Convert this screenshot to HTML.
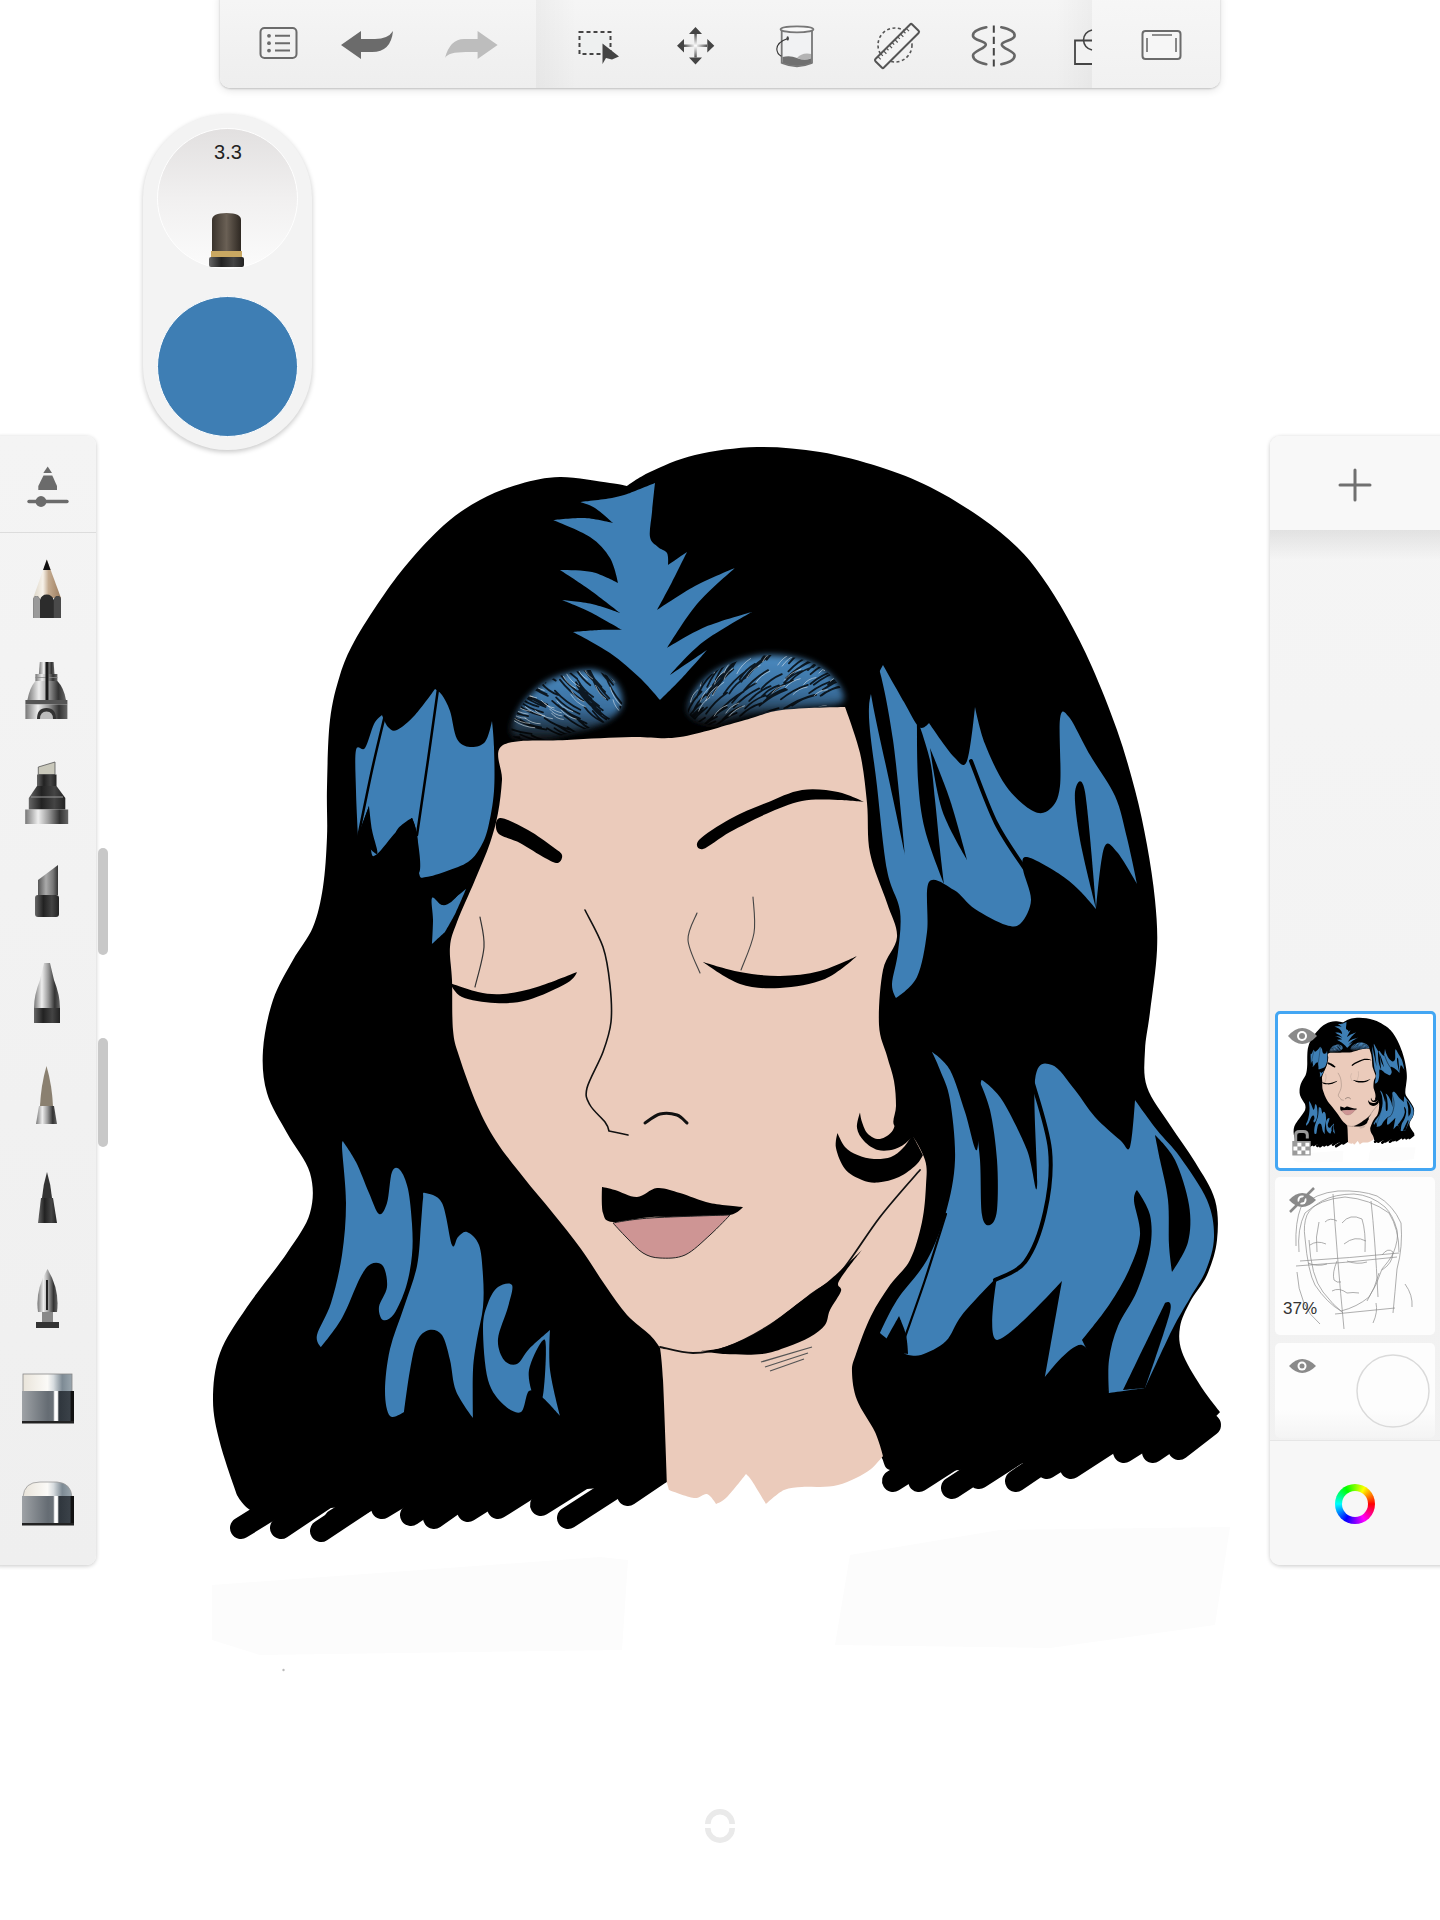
<!DOCTYPE html>
<html><head><meta charset="utf-8">
<style>
html,body{margin:0;padding:0;}
body{width:1440px;height:1920px;overflow:hidden;background:#fff;position:relative;font-family:"Liberation Sans",sans-serif;}
.abs{position:absolute;}
#art{position:absolute;left:0;top:0;}
#tb{left:220px;top:-12px;width:1000px;height:100px;border-radius:10px;background:linear-gradient(#F6F6F6,#EEEEEE);box-shadow:0 1px 2px rgba(0,0,0,.18),0 2px 8px rgba(0,0,0,.12);overflow:hidden;}
#tbmid{left:316px;top:0;width:556px;height:100px;background:linear-gradient(to right,rgba(0,0,0,.035),rgba(0,0,0,0) 40px,rgba(0,0,0,0) 520px,rgba(0,0,0,.03));}
#tbr{left:872px;top:0;width:128px;height:100px;background:linear-gradient(#F7F7F7,#F1F1F1);}
#puck{left:143px;top:114px;width:169px;height:336px;border-radius:85px;background:#F3F3F3;box-shadow:0 2px 5px rgba(0,0,0,.22);}
#pc1{left:157px;top:128px;width:139px;height:139px;border-radius:50%;background:linear-gradient(#E2E0E0,#F1F0F0 50%,#FBFBFB);border:1.5px solid #fff;}
#pc2{left:157px;top:296px;width:139px;height:139px;border-radius:50%;background:#3E7EB4;border:1.5px solid #fff;}
#sz{left:178px;top:141px;width:100px;text-align:center;font-size:20px;color:#222;}
#lt{left:-10px;top:436px;width:106px;height:1129px;border-radius:9px;background:linear-gradient(#F4F4F4,#EFEFEF);box-shadow:0 1px 4px rgba(0,0,0,.22);}
#ltsep{left:0;top:532px;width:96px;height:1px;background:#DCDCDC;}
.thumb{left:98px;width:10px;border-radius:5px;background:#C8C8C8;}
#rp{left:1270px;top:436px;width:190px;height:1129px;border-radius:10px;background:linear-gradient(#F5F5F5,#F1F1F1);box-shadow:0 1px 4px rgba(0,0,0,.22);overflow:hidden;}
#rph{left:0;top:0;width:190px;height:94px;background:#F8F8F8;}
#rpsh{left:0;top:94px;width:190px;height:30px;background:linear-gradient(rgba(0,0,0,.08),rgba(0,0,0,0));}
#rpc{left:0;top:1004px;width:190px;height:130px;background:#F7F7F7;border-top:1px solid #E6E6E6;}
.card{border-radius:5px;background:#FDFDFD;overflow:hidden;}
#card1{left:1275px;top:1011px;width:155px;height:154px;border:3px solid #43A6F3;background:#fff;}
#card2{left:1275px;top:1177px;width:160px;height:158px;}
#card3{left:1275px;top:1343px;width:160px;height:95px;background:linear-gradient(#FDFDFD 70%,#F4F4F4);}
#pct{left:1283px;top:1299px;font-size:17px;color:#333;}
#wheel{left:1335px;top:1484px;width:40px;height:40px;border-radius:50%;background:conic-gradient(from 90deg,#ff0000,#ff00ff,#0000ff,#00ffff,#00ff00,#ffff00,#ff0000);}
#wheelin{left:1342px;top:1491px;width:26px;height:26px;border-radius:50%;background:#F7F7F7;}
#ui{position:absolute;left:0;top:0;}
</style></head><body>
<svg id="art" width="1440" height="1920" viewBox="0 0 1440 1920"><g id="artg">
<path d="M212 1585L600 1557L628 1560L622 1650L260 1655L212 1640Z" fill="#FCFCFC"/>
<path d="M850 1555L1000 1530L1230 1527L1215 1625L1050 1648L835 1645Z" fill="#FCFCFC"/>
<circle cx="283.5" cy="1670" r="1.2" fill="#bbb"/>
<path d="M560 477C575 476.8 598.8 481.5 610 483C621.2 484.5 627 486 627 486C627 486 638.7 477.2 650 472C661.3 466.8 677.2 459.2 695 455C712.8 450.8 736.2 447.5 757 447C777.8 446.5 799.5 448.7 820 452C840.5 455.3 861.7 461.2 880 467C898.3 472.8 913.3 478.7 930 487C946.7 495.3 965.5 507 980 517C994.5 527 1006.7 537 1017 547C1027.3 557 1033.7 565.3 1042 577C1050.3 588.7 1058.7 602 1067 617C1075.3 632 1083.7 648.2 1092 667C1100.3 685.8 1109.8 709.5 1117 730C1124.2 750.5 1130 770.8 1135 790C1140 809.2 1143.7 826.7 1147 845C1150.3 863.3 1153.3 882.5 1155 900C1156.7 917.5 1157.8 931.3 1157 950C1156.2 968.7 1152 995.3 1150 1012C1148 1028.7 1145.5 1037.5 1145 1050C1144.5 1062.5 1142.8 1074.5 1147 1087C1151.2 1099.5 1162 1112.5 1170 1125C1178 1137.5 1187.5 1149.5 1195 1162C1202.5 1174.5 1211.3 1187 1215 1200C1218.7 1213 1218.3 1227.5 1217 1240C1215.7 1252.5 1211.5 1264.7 1207 1275C1202.5 1285.3 1194.5 1293.3 1190 1302C1185.5 1310.7 1181.3 1318.7 1180 1327C1178.7 1335.3 1178.7 1342.3 1182 1352C1185.3 1361.7 1193.7 1375 1200 1385C1206.3 1395 1220 1412 1220 1412C1220 1412 1212 1421.2 1207 1425C1202 1428.8 1199.5 1432.2 1190 1435C1180.5 1437.8 1168.3 1438.7 1150 1442C1131.7 1445.3 1105 1451 1080 1455C1055 1459 1025 1463.2 1000 1466C975 1468.8 948.3 1471.3 930 1472C911.7 1472.7 901.7 1473.7 890 1470C878.3 1466.3 891.7 1451.3 860 1450C828.3 1448.7 732.2 1456.7 700 1462C667.8 1467.3 683.7 1477.7 667 1482C650.3 1486.3 627.8 1485.8 600 1488C572.2 1490.2 533.3 1492.5 500 1495C466.7 1497.5 433.3 1500.5 400 1503C366.7 1505.5 324.2 1508.5 300 1510C275.8 1511.5 265.5 1514.5 255 1512C244.5 1509.5 237 1495 237 1495C237 1495 224 1458.8 220 1443C216 1427.2 213 1415 213 1400C213 1385 214.3 1368.5 220 1353C225.7 1337.5 235.8 1323.7 247 1307C258.2 1290.3 276.5 1268.7 287 1253C297.5 1237.3 306.2 1226.3 310 1213C313.8 1199.7 313.8 1186.3 310 1173C306.2 1159.7 294.2 1146.3 287 1133C279.8 1119.7 271 1106.8 267 1093C263 1079.2 262 1065.5 263 1050C264 1034.5 268 1015 273 1000C278 985 286.3 972.2 293 960C299.7 947.8 308 939.2 313 927C318 914.8 320.7 902 323 887C325.3 872 326.3 853.7 327 837C327.7 820.3 326.5 806.5 327 787C327.5 767.5 327.8 738.7 330 720C332.2 701.3 336 688 340 675C344 662 347.2 654.7 354 642C360.8 629.3 372 612.2 381 599C390 585.8 397.5 575.3 408 563C418.5 550.7 432 535.5 444 525C456 514.5 467.3 506.8 480 500C492.7 493.2 506.7 487.8 520 484C533.3 480.2 545 477.2 560 477Z" fill="#000"/>
<line x1="241" y1="1528" x2="315" y2="1482" stroke="#000" stroke-width="22" stroke-linecap="round"/>
<line x1="281" y1="1528" x2="350" y2="1482" stroke="#000" stroke-width="22" stroke-linecap="round"/>
<line x1="321" y1="1531" x2="395" y2="1482" stroke="#000" stroke-width="22" stroke-linecap="round"/>
<line x1="335" y1="1520" x2="400" y2="1480" stroke="#000" stroke-width="22" stroke-linecap="round"/>
<line x1="382" y1="1508" x2="445" y2="1470" stroke="#000" stroke-width="22" stroke-linecap="round"/>
<line x1="411" y1="1515" x2="470" y2="1475" stroke="#000" stroke-width="22" stroke-linecap="round"/>
<line x1="434" y1="1518" x2="495" y2="1475" stroke="#000" stroke-width="22" stroke-linecap="round"/>
<line x1="468" y1="1511" x2="525" y2="1475" stroke="#000" stroke-width="22" stroke-linecap="round"/>
<line x1="498" y1="1508" x2="555" y2="1472" stroke="#000" stroke-width="22" stroke-linecap="round"/>
<line x1="541" y1="1505" x2="600" y2="1468" stroke="#000" stroke-width="22" stroke-linecap="round"/>
<line x1="568" y1="1518" x2="630" y2="1478" stroke="#000" stroke-width="22" stroke-linecap="round"/>
<line x1="628" y1="1495" x2="662" y2="1472" stroke="#000" stroke-width="22" stroke-linecap="round"/>
<line x1="893" y1="1481" x2="950" y2="1445" stroke="#000" stroke-width="22" stroke-linecap="round"/>
<line x1="919" y1="1481" x2="975" y2="1445" stroke="#000" stroke-width="22" stroke-linecap="round"/>
<line x1="952" y1="1488" x2="1010" y2="1450" stroke="#000" stroke-width="22" stroke-linecap="round"/>
<line x1="979" y1="1478" x2="1035" y2="1442" stroke="#000" stroke-width="22" stroke-linecap="round"/>
<line x1="1016" y1="1481" x2="1072" y2="1443" stroke="#000" stroke-width="22" stroke-linecap="round"/>
<line x1="1047" y1="1468" x2="1100" y2="1435" stroke="#000" stroke-width="22" stroke-linecap="round"/>
<line x1="1071" y1="1468" x2="1125" y2="1433" stroke="#000" stroke-width="22" stroke-linecap="round"/>
<line x1="1124" y1="1452" x2="1175" y2="1420" stroke="#000" stroke-width="22" stroke-linecap="round"/>
<line x1="1153" y1="1452" x2="1200" y2="1420" stroke="#000" stroke-width="22" stroke-linecap="round"/>
<line x1="1179" y1="1449" x2="1210" y2="1425" stroke="#000" stroke-width="22" stroke-linecap="round"/>
<g><defs><clipPath id="clpL"><path d="M512 735C509 729.2 515.7 714.2 522 705C528.3 695.8 538.7 685.8 550 680C561.3 674.2 579.2 669.7 590 670C600.8 670.3 609.7 676.2 615 682C620.3 687.8 623.7 698.3 622 705C620.3 711.7 613.7 717.3 605 722C596.3 726.7 580.8 730 570 733C559.2 736 549.7 739.7 540 740C530.3 740.3 515 740.8 512 735Z"/></clipPath><clipPath id="clpR"><path d="M688 712C686 705.2 693 692 700 684C707 676 718.3 668.8 730 664C741.7 659.2 756.7 655.3 770 655C783.3 654.7 799.2 657.8 810 662C820.8 666.2 829.7 673.3 835 680C840.3 686.7 847.8 697.3 842 702C836.2 706.7 815.3 706 800 708C784.7 710 764.7 711.2 750 714C735.3 716.8 722.3 725.3 712 725C701.7 724.7 690 718.8 688 712Z"/></clipPath></defs><linearGradient id="hg" x1="0" y1="0" x2="0" y2="1"><stop offset="0" stop-color="#4a8ac0"/><stop offset="0.55" stop-color="#3a6f9e"/><stop offset="1" stop-color="#111"/></linearGradient><filter id="hblur" x="-20%" y="-20%" width="140%" height="140%"><feGaussianBlur stdDeviation="3"/></filter><path d="M512 735C509 729.2 515.7 714.2 522 705C528.3 695.8 538.7 685.8 550 680C561.3 674.2 579.2 669.7 590 670C600.8 670.3 609.7 676.2 615 682C620.3 687.8 623.7 698.3 622 705C620.3 711.7 613.7 717.3 605 722C596.3 726.7 580.8 730 570 733C559.2 736 549.7 739.7 540 740C530.3 740.3 515 740.8 512 735Z" fill="url(#hg)" filter="url(#hblur)"/><path d="M688 712C686 705.2 693 692 700 684C707 676 718.3 668.8 730 664C741.7 659.2 756.7 655.3 770 655C783.3 654.7 799.2 657.8 810 662C820.8 666.2 829.7 673.3 835 680C840.3 686.7 847.8 697.3 842 702C836.2 706.7 815.3 706 800 708C784.7 710 764.7 711.2 750 714C735.3 716.8 722.3 725.3 712 725C701.7 724.7 690 718.8 688 712Z" fill="url(#hg)" filter="url(#hblur)"/><g clip-path="url(#clpL)"><path d="M579.9 718.7Q564.5 712.3 552.2 700.9M579.5 713.8Q566.1 708.1 556.2 697.5M542.9 712.4Q528.6 708.6 516.9 699.6M617.5 683.5Q609.4 673.9 606.6 661.5M531.6 733.8Q516.4 732.7 502.9 725.7M527.2 746.5Q510.1 746.5 494.1 740.7M601.9 721.5Q591.4 716.5 584.6 707.0M516.8 711.3Q505.9 710.0 497.2 703.2M539.4 690.1Q529.0 686.9 522.0 678.6M580.3 709.8Q565.8 702.6 554.9 690.6M586.6 723.5Q573.5 718.8 563.6 708.9M602.8 710.3Q592.3 703.7 586.1 692.9M649.6 757.1Q637.3 746.5 629.7 732.2M607.6 699.7Q598.1 692.0 593.5 680.8M555.7 680.6Q542.1 672.9 532.3 660.6M571.1 737.2Q558.0 735.5 547.0 728.3M640.1 741.2Q631.9 734.5 628.5 724.4M546.3 741.1Q532.6 740.7 520.3 734.5M640.5 707.0Q634.5 697.7 634.2 686.6M600.2 733.5Q588.4 729.8 579.7 721.0M531.5 699.7Q515.3 694.2 502.1 683.6M613.1 684.8Q604.7 675.9 601.6 664.0M531.4 678.8Q516.9 672.2 505.9 660.8M541.0 715.3Q527.7 712.5 517.0 704.2M541.2 727.3Q529.7 726.4 520.3 719.8M599.5 685.0Q589.5 676.1 584.3 663.7M547.8 695.8Q532.1 689.1 519.7 677.3M621.6 703.4Q610.9 690.8 605.4 675.3M547.3 704.6Q531.9 699.1 519.6 688.5M601.4 686.9Q589.2 674.8 581.9 659.2M546.6 694.2Q532.1 688.2 520.9 677.1M558.0 695.0Q547.6 691.1 540.8 682.4M528.1 716.1Q516.0 714.4 506.2 707.1M595.5 704.2Q584.0 696.8 576.9 685.3M639.6 716.9Q631.7 704.8 629.4 690.5M626.3 690.0Q619.2 680.8 617.6 669.3M635.2 739.6Q625.3 732.3 620.1 721.2M546.3 729.7Q529.6 727.0 515.0 718.6M547.3 744.6Q530.9 743.9 515.7 737.4M594.3 706.3Q584.4 700.9 578.6 691.1M521.8 744.2Q509.7 745.0 498.6 739.8M609.3 698.4Q597.7 687.3 591.0 672.7M593.2 696.9Q583.3 690.5 577.8 680.1M608.1 680.7Q599.7 672.0 596.3 660.3M593.6 739.2Q579.3 735.9 567.5 727.2M554.0 741.4Q542.0 741.3 531.6 735.4M518.8 692.9Q505.8 689.2 495.6 680.2M524.0 685.8Q511.6 681.7 502.4 672.4M590.3 685.3Q579.9 677.4 574.2 665.7M636.9 752.4Q623.5 745.8 613.6 734.5M606.4 719.4Q596.3 713.9 590.2 704.1M523.2 675.7Q508.0 668.9 496.2 657.1M609.0 746.4Q598.4 744.7 590.2 737.7M601.8 714.1Q588.8 705.7 579.9 693.1M558.5 747.3Q547.4 747.9 537.6 742.6M592.9 732.0Q577.2 726.6 564.5 715.9M616.2 731.6Q602.5 723.5 592.8 711.0M634.2 706.9Q625.7 694.3 622.9 679.4M635.6 744.2Q624.4 736.7 617.7 725.2M623.0 742.5Q609.9 736.5 600.4 725.7M599.1 705.9Q587.2 697.7 579.6 685.3M595.8 683.1Q584.8 673.2 578.6 659.7M646.9 748.4Q636.5 736.9 631.3 722.4M570.3 729.6Q556.2 726.5 544.5 718.0M574.5 736.0Q563.4 734.9 554.5 728.1M612.9 680.0Q603.6 668.8 599.7 654.7M580.7 693.8Q567.9 685.6 559.2 673.1M586.0 723.0Q570.5 716.7 558.2 705.3M548.8 673.9Q537.6 668.2 530.3 657.9M603.1 690.4Q594.1 683.0 589.9 672.0M634.3 729.0Q624.7 719.4 620.3 706.6M631.3 704.6Q622.6 692.4 619.5 677.7M545.5 707.0Q530.4 702.1 518.1 691.9M637.1 744.9Q626.2 737.4 619.8 726.0M591.4 698.4Q581.6 692.4 576.0 682.3M586.7 738.3Q570.8 734.7 557.4 725.6M611.9 746.3Q599.7 743.7 590.2 735.7M538.5 706.6Q526.4 703.7 517.1 695.5M546.5 705.3Q532.4 700.7 521.3 691.0M583.5 700.9Q569.7 692.5 559.9 679.6M640.9 711.4Q634.7 702.1 634.3 691.0M519.5 737.2Q508.6 737.7 499.0 732.4M609.4 719.3Q598.5 712.8 592.0 701.9M616.5 676.6Q609.1 667.8 607.2 656.4M577.1 678.7Q564.2 669.0 555.7 655.3M545.4 682.6Q535.2 678.7 528.7 669.9M600.2 710.9Q587.8 702.9 579.6 690.5M607.7 738.3Q591.9 732.2 579.1 720.9M605.1 691.9Q595.0 682.7 589.7 670.0M539.6 674.2Q527.3 668.2 518.6 657.5" stroke="#000" stroke-width="1.8" fill="none" opacity="0.8" stroke-linecap="round"/><path d="M572.7 711.5Q563.2 708.7 556.9 700.9M536.5 675.6Q528.2 673.0 523.4 665.6M552.5 718.7Q542.5 717.3 535.1 710.4M585.4 706.8Q576.2 703.0 570.9 694.6M536.6 697.9Q528.7 696.8 523.9 690.5M614.8 682.3Q607.5 674.6 605.5 664.2M530.2 711.1Q521.6 710.5 515.5 704.4M563.4 719.4Q556.1 719.0 551.6 713.2M529.7 723.3Q520.4 723.2 513.1 717.3M534.8 727.7Q523.6 727.1 514.4 720.9M533.0 696.9Q525.3 695.9 520.6 689.7M554.1 707.9Q546.3 706.8 541.5 700.5M592.5 678.7Q585.8 674.6 583.8 666.9M605.8 698.7Q598.3 693.8 595.5 685.3M583.8 701.8Q575.6 698.5 571.4 690.7M528.2 714.2Q517.0 712.7 508.2 705.7M622.1 713.3Q615.0 708.2 613.0 699.7M561.4 712.8Q551.6 710.6 544.9 703.2M533.8 687.4Q525.3 685.4 520.1 678.4M576.2 719.1Q567.1 717.1 561.2 710.0M525.9 718.3Q516.9 718.0 510.0 712.2M575.6 688.1Q567.4 684.4 563.4 676.3M561.9 715.9Q554.3 715.1 549.6 709.0M579.5 686.7Q570.6 681.9 566.0 672.8M525.8 689.4Q517.3 687.8 511.9 681.0M587.3 679.6Q579.5 674.7 576.5 666.1M544.1 690.4Q535.2 688.0 529.8 680.6M621.2 705.7Q613.1 698.0 610.1 687.2M540.2 723.8Q531.5 723.6 524.9 717.9M544.5 715.7Q533.6 713.9 525.3 706.7" stroke="#e8eef3" stroke-width="1.0" fill="none" opacity="0.55" stroke-linecap="round"/></g><g clip-path="url(#clpR)"><path d="M706.1 713.8Q714.5 701.1 727.1 692.7M812.9 667.1Q821.3 658.3 832.8 654.5M690.4 678.0Q693.7 662.9 702.6 650.2M687.9 700.4Q690.8 688.7 699.0 679.9M712.9 693.9Q720.7 679.8 733.2 669.4M770.8 654.6Q777.4 644.1 788.2 637.9M685.8 730.7Q694.2 717.0 707.0 707.4M800.6 720.0Q814.1 712.4 829.6 710.4M829.4 715.9Q840.0 709.6 852.3 709.0M809.2 693.1Q821.7 683.7 836.8 679.7M761.3 689.0Q769.8 679.1 781.8 674.1M739.6 679.5Q745.2 669.6 755.1 663.9M801.5 718.3Q816.6 710.0 833.5 707.4M780.9 699.4Q792.9 689.5 807.8 684.8M687.0 713.6Q691.8 700.9 701.5 691.5M695.8 674.6Q699.1 660.9 707.8 649.8M706.9 695.4Q713.2 682.2 724.3 672.7M732.8 666.7Q738.9 654.2 749.7 645.6M706.5 674.9Q709.8 663.5 718.3 655.1M727.4 663.1Q733.5 649.5 744.5 639.4M828.1 684.6Q840.4 675.4 855.3 671.6M828.6 654.7Q836.3 646.2 847.3 642.6M801.3 720.7Q814.2 713.4 828.9 711.7M691.1 694.3Q696.1 678.7 706.4 666.0M818.5 716.8Q828.6 710.4 840.6 709.8M810.4 684.0Q822.2 674.2 836.9 669.7M684.3 737.4Q692.6 725.4 705.0 717.7M788.4 671.4Q798.3 660.6 811.8 654.6M763.7 701.8Q773.0 692.7 785.4 688.7M790.7 680.6Q799.4 671.5 811.3 667.5M693.1 711.9Q697.2 701.4 706.1 694.3M704.0 663.9Q707.9 649.5 717.2 637.9M761.4 696.9Q768.5 688.7 778.9 685.4M741.3 681.7Q747.0 672.0 756.9 666.6M665.5 739.6Q667.9 728.5 675.6 720.0M715.9 679.4Q721.8 666.1 732.7 656.3M679.2 696.7Q681.2 683.8 688.6 673.2M810.1 652.9Q818.4 643.1 830.3 638.1M746.6 732.4Q758.3 724.6 772.2 722.5M745.1 708.5Q753.7 699.4 765.6 695.3M670.8 703.3Q672.8 686.7 680.6 672.0M790.6 675.3Q801.2 664.5 815.2 658.7M810.6 674.2Q821.3 664.4 835.0 659.7M726.4 675.2Q731.7 663.9 741.6 656.3M701.3 683.8Q704.1 673.3 712.0 665.8M732.1 664.5Q739.2 650.5 751.0 640.3M766.9 656.1Q775.9 643.2 789.0 634.6M696.7 697.6Q701.8 684.2 711.9 674.1M721.7 679.9Q727.6 667.7 738.1 659.3M687.5 726.7Q692.4 716.4 701.8 710.1M807.9 670.1Q816.6 661.0 828.6 657.0M733.3 656.8Q737.5 646.1 746.5 638.9M723.7 694.1Q732.8 680.5 746.2 671.0M836.4 655.9Q846.6 646.1 860.0 641.5M685.8 723.2Q690.9 711.5 700.8 703.5M820.6 695.8Q829.5 688.6 840.9 686.9M667.7 681.9Q667.9 665.5 674.1 650.3M690.8 696.8Q694.3 684.2 703.1 674.6M722.5 719.8Q730.4 710.7 741.7 706.5M784.2 708.6Q798.1 698.9 814.4 694.8M751.4 728.3Q762.4 720.5 775.8 718.2M759.5 705.8Q771.7 695.2 786.9 689.7M822.2 660.8Q830.0 652.3 841.0 648.8M753.6 720.1Q764.8 711.4 778.6 708.1M713.4 732.9Q722.4 724.2 734.5 720.6M682.7 659.4Q682.8 648.6 688.6 639.4M788.9 663.3Q799.0 651.7 812.8 644.9M810.6 733.5Q825.3 727.0 841.3 726.5M733.7 707.4Q744.6 695.5 759.1 688.4M786.1 678.3Q797.2 667.2 811.6 661.1M683.4 687.0Q686.9 670.1 696.0 655.5M743.7 678.6Q752.7 665.6 765.9 656.9M744.5 653.4Q748.7 643.4 757.6 637.2M707.2 686.9Q714.2 671.5 726.0 659.6M702.1 727.4Q712.6 714.9 726.9 707.1M730.8 735.5Q743.7 726.7 759.0 723.4M747.5 676.5Q755.1 665.1 766.8 658.0M821.8 695.2Q831.2 687.9 842.9 686.0M729.3 693.5Q735.5 683.3 745.9 677.5M761.9 659.0Q771.0 645.8 784.3 636.8M696.4 666.7Q699.4 652.5 708.0 640.8M714.0 727.7Q723.7 717.7 736.6 712.8M753.3 720.9Q762.6 713.2 774.4 710.9M792.2 705.6Q802.9 697.4 816.1 694.8M829.1 655.5Q841.1 644.3 856.2 638.2M688.5 724.9Q693.5 714.4 703.1 707.8M674.1 703.1Q676.8 686.5 685.2 672.0M707.4 697.6Q714.0 684.5 725.2 675.1M707.5 698.1Q711.5 688.2 720.3 682.1M740.2 716.0Q749.3 707.0 761.6 703.2M703.0 662.7Q707.0 648.0 716.3 635.9M733.2 729.4Q745.6 720.0 760.6 716.0M677.7 735.6Q685.7 720.8 698.4 709.8M803.0 720.2Q816.1 712.8 831.2 711.1M786.8 707.6Q798.5 699.0 812.7 695.8M708.7 669.4Q713.7 654.8 723.9 643.3M766.8 659.8Q775.3 647.6 788.0 639.8M766.7 696.7Q778.2 685.9 792.9 680.3M813.8 684.7Q826.4 674.7 841.7 670.1M749.2 701.0Q758.2 691.1 770.6 686.2M822.8 689.8Q836.7 680.1 853.1 675.8M718.3 712.7Q729.0 699.8 743.5 691.6M784.1 682.8Q791.4 674.4 802.0 671.0M744.1 690.4Q754.2 677.9 768.1 670.1M798.4 732.1Q810.4 725.9 824.0 725.5M732.1 702.7Q742.0 690.6 755.7 683.3M681.0 674.0Q681.5 662.4 687.8 652.7M718.0 683.7Q726.1 668.6 738.8 657.3M697.8 731.9Q705.5 722.0 716.9 716.7M698.0 734.3Q704.9 725.4 715.4 721.4" stroke="#000" stroke-width="1.8" fill="none" opacity="0.8" stroke-linecap="round"/><path d="M700.4 701.2Q703.6 691.8 711.6 685.9M824.3 670.6Q829.6 664.2 837.8 663.0M793.1 694.5Q798.7 688.2 807.1 687.1M784.3 680.2Q791.0 672.1 801.0 669.0M702.7 673.1Q705.1 662.4 712.8 654.6M736.9 673.7Q741.5 664.1 750.5 658.6M777.8 665.0Q782.8 657.0 791.7 653.6M782.2 666.1Q787.7 657.9 797.0 654.4M704.9 676.9Q705.9 669.4 712.0 664.9M714.2 716.0Q718.7 708.3 727.1 705.2M830.2 681.3Q837.2 674.5 846.9 673.1M814.4 695.5Q819.7 689.9 827.3 689.7M772.1 693.2Q776.8 686.8 784.6 685.4M698.6 711.1Q701.9 702.3 709.8 697.4M714.5 684.1Q716.7 676.3 723.6 672.0M803.6 684.5Q808.3 678.4 815.9 677.6M806.3 660.1Q811.0 653.1 819.1 651.0M690.6 702.0Q691.6 694.4 697.8 689.8M762.6 661.8Q766.8 653.6 775.1 649.7M785.5 687.6Q791.2 680.6 800.2 678.7M755.6 683.0Q760.8 674.8 769.8 671.2M700.3 686.0Q701.7 677.9 708.2 672.9M813.3 710.6Q818.8 705.4 826.3 705.9M705.8 700.7Q709.2 691.7 717.2 686.5M687.6 703.1Q690.3 692.2 698.1 684.3M746.9 677.8Q751.4 669.4 760.1 665.3M824.0 670.3Q829.4 663.7 837.8 662.4M712.7 695.6Q716.0 687.0 723.9 682.3M724.1 679.3Q726.1 672.2 732.7 668.8M729.3 716.1Q735.2 708.5 744.5 705.8M725.9 713.0Q730.6 705.6 738.9 703.1M723.7 658.2Q725.2 650.5 731.7 646.1M714.1 673.0Q717.4 662.6 725.6 655.6M724.1 672.8Q727.3 663.6 735.3 658.0M818.9 673.0Q826.1 665.5 836.2 663.1" stroke="#e8eef3" stroke-width="1.0" fill="none" opacity="0.55" stroke-linecap="round"/></g></g>
<path d="M503 745C513.8 738.3 545.5 741.3 567 740C588.5 738.7 613.2 737.5 632 737C650.8 736.5 661.2 739.8 680 737C698.8 734.2 728 724.5 745 720C762 715.5 765.3 712.2 782 710C798.7 707.8 845 707 845 707C845 707 856.3 737 860 753C863.7 769 865.3 786.3 867 803C868.7 819.7 866.7 836.3 870 853C873.3 869.7 882.5 889 887 903C891.5 917 897.7 925.8 897 937C896.3 948.2 886 955.3 883 970C880 984.7 878.3 1010.7 879 1025C879.7 1039.3 884.5 1046.7 887 1056C889.5 1065.3 892.5 1072.7 894 1081C895.5 1089.3 896 1098.7 896 1106C896 1113.3 891.7 1120.5 894 1125C896.3 1129.5 904.8 1127.2 910 1133C915.2 1138.8 922.3 1151.3 925 1160C927.7 1168.7 926.5 1174.7 926 1185C925.5 1195.3 924.7 1209.5 922 1222C919.3 1234.5 915.3 1249.5 910 1260C904.7 1270.5 896.5 1275.7 890 1285C883.5 1294.3 876.7 1304.5 871 1316C865.3 1327.5 859.2 1344.7 856 1354C852.8 1363.3 851.8 1364.3 852 1372C852.2 1379.7 853.2 1390 857 1400C860.8 1410 870.7 1422.7 875 1432C879.3 1441.3 883 1456 883 1456C883 1456 875.5 1465.3 871 1469C866.5 1472.7 861.5 1475.3 856 1478C850.5 1480.7 844 1483.5 838 1485C832 1486.5 826 1486.7 820 1487C814 1487.3 808 1486.5 802 1487C796 1487.5 790 1487.2 784 1490C778 1492.8 766 1504 766 1504C766 1504 755.3 1486 752 1481C748.7 1476 746 1474 746 1474C746 1474 732 1492 727 1497C722 1502 716 1504 716 1504C716 1504 710.7 1495 707 1494C703.3 1493 700.3 1498.7 694 1498C687.7 1497.3 669 1490 669 1490C669 1490 667 1483 667 1483C667 1483 664.2 1402.5 663 1380C661.8 1357.5 660 1348 660 1348C660 1348 655.5 1340.5 650 1335C644.5 1329.5 634.5 1323.3 627 1315C619.5 1306.7 612.7 1296 605 1285C597.3 1274 589.8 1261.2 581 1249C572.2 1236.8 561.5 1223.8 552 1212C542.5 1200.2 533.3 1189.8 524 1178C514.7 1166.2 503.8 1153.2 496 1141C488.2 1128.8 483.2 1119.2 477 1105C470.8 1090.8 463 1068.5 459 1056C455 1043.5 454.2 1042.7 453 1030C451.8 1017.3 452.5 993.8 452 980C451.5 966.2 449.2 956.7 450 947C450.8 937.3 452.8 933.2 457 922C461.2 910.8 469.5 893.2 475 880C480.5 866.8 486.2 854.2 490 843C493.8 831.8 496 823.5 498 813C500 802.5 501.2 791.3 502 780C502.8 768.7 492.2 751.7 503 745Z" fill="#EBCBBB"/>
<path d="M655 483C655 483 652.8 503 652 512C651.2 521 649 531.2 650 537C651 542.8 655.2 544.3 658 547C660.8 549.7 665.3 550 667 553C668.7 556 668 565 668 565C668 565 687 552 687 552C687 552 677 572.3 672 582C667 591.7 657 610 657 610C657 610 682 593 695 586C708 579 735 568 735 568C735 568 708.3 590.7 697 604C685.7 617.3 667 648 667 648C667 648 690.8 633 705 627C719.2 621 752 612 752 612C752 612 716.7 631.5 703 642C689.3 652.5 670 675 670 675C670 675 707 650 707 650C707 650 689.8 669.7 682 678C674.2 686.3 660 700 660 700C660 700 648.3 685.8 640 678C631.7 670.2 621.2 660.7 610 653C598.8 645.3 573 632 573 632C573 632 591.8 630.3 600 630C608.2 629.7 622 630 622 630C622 630 600 617 590 612C580 607 562 600 562 600C562 600 582.3 601.8 592 604C601.7 606.2 620 613 620 613C620 613 600 597.2 590 590C580 582.8 560 570 560 570C560 570 582.3 569.8 592 572C601.7 574.2 618 583 618 583C618 583 614.7 565.7 610 558C605.3 550.3 599.5 543.3 590 537C580.5 530.7 553 520 553 520C553 520 575 517.5 585 518C595 518.5 613 523 613 523C613 523 600.5 511.5 595 508C589.5 504.5 580 502 580 502C580 502 603.7 499.5 612 498C620.3 496.5 630 493 630 493C630 493 655 483 655 483Z" fill="#3E7FB5"/>
<path d="M356 750C357.5 742.8 362 752.3 365 748C368 743.7 371.2 729.5 374 724C376.8 718.5 382 715 382 715C382 715 385.5 724.5 388 727C390.5 729.5 392.5 732 397 730C401.5 728 408.7 721.8 415 715C421.3 708.2 435 689 435 689C435 689 439.5 691.3 442 695C444.5 698.7 447.5 703.7 450 711C452.5 718.3 453.7 733 457 739C460.3 745 465.3 746.5 470 747C474.7 747.5 481.3 746.3 485 742C488.7 737.7 492 721 492 721C492 721 493.7 735.3 494 747C494.3 758.7 495 777.5 494 791C493 804.5 490.3 818.5 488 828C485.7 837.5 483.3 842.3 480 848C476.7 853.7 473.5 858.2 468 862C462.5 865.8 454 868.5 447 871C440 873.5 430.7 876.7 426 877C421.3 877.3 420.5 880 419 873C417.5 866 418.2 844.2 417 835C415.8 825.8 412 818 412 818C412 818 401.8 826 396 832C390.2 838 381.2 851 377 854C372.8 857 372.3 858 371 850C369.7 842 369 806 369 806C369 806 358 836 358 836C358 836 356.3 805.3 356 791C355.7 776.7 354.5 757.2 356 750Z" fill="#3E7FB5"/>
<path d="M432 898C433.5 895.5 438.7 904.7 442 905C445.3 905.3 448 902.7 452 900C456 897.3 466 889 466 889C466 889 459.5 904.8 456 912C452.5 919.2 445 932 445 932C445 932 432 944 432 944C432 944 433 927.7 433 920C433 912.3 430.5 900.5 432 898Z" fill="#3E7FB5"/>
<path d="M883 665C883 665 898 691.7 904 702C910 712.3 914.8 723.5 919 727C923.2 730.5 929 723 929 723C929 723 947.7 750.7 954 757C960.3 763.3 963.5 769.3 967 761C970.5 752.7 975 707 975 707C975 707 979.8 730.8 985 744C990.2 757.2 998 774.8 1006 786C1014 797.2 1025.7 807.2 1033 811C1040.3 814.8 1045.5 813.2 1050 809C1054.5 804.8 1058.3 801 1060 786C1061.7 771 1058.5 730.5 1060 719C1061.5 707.5 1064 711 1069 717C1074 723 1082.3 741.8 1090 755C1097.7 768.2 1108.8 782.2 1115 796C1121.2 809.8 1123.3 823.3 1127 838C1130.7 852.7 1137 884 1137 884C1137 884 1122.5 858 1117 852C1111.5 846 1107.5 838.5 1104 848C1100.5 857.5 1096 909 1096 909C1096 909 1085.3 896 1079 890C1072.7 884 1066.7 878.5 1058 873C1049.3 867.5 1032.8 857.7 1027 857C1021.2 856.3 1022.3 861.8 1023 869C1023.7 876.2 1031.3 891 1031 900C1030.7 909 1025.2 918.8 1021 923C1016.8 927.2 1013.7 927.3 1006 925C998.3 922.7 983.7 914.8 975 909C966.3 903.2 961.7 894.5 954 890C946.3 885.5 933.5 875 929 882C924.5 889 929 916.2 927 932C925 947.8 922.2 966 917 977C911.8 988 896 998 896 998C896 998 891.7 991.7 892 984C892.3 976.3 896.7 964.2 898 952C899.3 939.8 901.8 924.7 900 911C898.2 897.3 890.8 890.8 887 870C883.2 849.2 880 813.2 877 786C874 758.8 868 727.2 869 707C870 686.8 883 665 883 665Z" fill="#3E7FB5"/>
<path d="M932 1052C932 1052 944.5 1060 950 1070C955.5 1080 960.5 1098.7 965 1112C969.5 1125.3 974.5 1153.7 977 1150C979.5 1146.3 979.2 1101.7 980 1090C980.8 1078.3 982 1080 982 1080C982 1080 994.5 1088.3 1002 1100C1009.5 1111.7 1021.2 1135.5 1027 1150C1032.8 1164.5 1035.7 1198.7 1037 1187C1038.3 1175.3 1032.5 1100.3 1035 1080C1037.5 1059.7 1045.3 1063.3 1052 1065C1058.7 1066.7 1067.8 1081.3 1075 1090C1082.2 1098.7 1087.5 1108.7 1095 1117C1102.5 1125.3 1114.2 1135 1120 1140C1125.8 1145 1127.5 1153.7 1130 1147C1132.5 1140.3 1135 1100 1135 1100C1135 1100 1149.5 1120.5 1157 1130C1164.5 1139.5 1171.7 1145.3 1180 1157C1188.3 1168.7 1201.3 1186.7 1207 1200C1212.7 1213.3 1214.2 1225.3 1214 1237C1213.8 1248.7 1210 1259.8 1206 1270C1202 1280.2 1195.7 1288 1190 1298C1184.3 1308 1179.5 1315 1172 1330C1164.5 1345 1145 1388 1145 1388C1145 1388 1109 1393 1109 1393C1109 1393 1092.7 1347.7 1082 1345C1071.3 1342.3 1045 1377 1045 1377C1045 1377 1062 1281 1062 1281C1062 1281 1007.8 1340.7 997 1340C986.2 1339.3 997 1277 997 1277C997 1277 970.5 1304.3 962 1315C953.5 1325.7 952.8 1334.3 946 1341C939.2 1347.7 927.8 1352.8 921 1355C914.2 1357.2 905 1354 905 1354C905 1354 880 1333 880 1333C880 1333 889.2 1312.2 897 1300C904.8 1287.8 918.8 1274.7 927 1260C935.2 1245.3 941.3 1228.7 946 1212C950.7 1195.3 954.3 1178.7 955 1160C955.7 1141.3 952.5 1115 950 1100C947.5 1085 943 1078 940 1070C937 1062 932 1052 932 1052Z" fill="#3E7FB5"/>
<path d="M344 1143C344 1143 351.8 1153.7 356 1162C360.2 1170.3 365.2 1184.3 369 1193C372.8 1201.7 376 1212.3 379 1214C382 1215.7 384.8 1210 387 1203C389.2 1196 389.8 1177.5 392 1172C394.2 1166.5 397.3 1167.2 400 1170C402.7 1172.8 406 1180 408 1189C410 1198 411.3 1213 412 1224C412.7 1235 413 1244.5 412 1255C411 1265.5 409 1277.2 406 1287C403 1296.8 397.8 1308.5 394 1314C390.2 1319.5 385.5 1321.2 383 1320C380.5 1318.8 378.3 1312.5 379 1307C379.7 1301.5 386.3 1293.8 387 1287C387.7 1280.2 385.7 1269.8 383 1266C380.3 1262.2 374.8 1262 371 1264C367.2 1266 364.8 1269 360 1278C355.2 1287 348.5 1306.5 342 1318C335.5 1329.5 321 1347 321 1347C321 1347 315.3 1342.3 317 1335C318.7 1327.7 326.8 1316.3 331 1303C335.2 1289.7 339.5 1271.7 342 1255C344.5 1238.3 346 1221 346 1203C346 1185 342.3 1157 342 1147C341.7 1137 344 1143 344 1143Z" fill="#3E7FB5"/>
<path d="M425 1193C428.2 1193.7 437.5 1194.3 442 1203C446.5 1211.7 449.3 1239.3 452 1245C454.7 1250.7 455.5 1239.2 458 1237C460.5 1234.8 463.5 1230.7 467 1232C470.5 1233.3 476.3 1237.7 479 1245C481.7 1252.3 482.3 1265.7 483 1276C483.7 1286.3 484 1296.5 483 1307C482 1317.5 478.7 1328.5 477 1339C475.3 1349.5 473.7 1356.8 473 1370C472.3 1383.2 473 1418 473 1418C473 1418 459.8 1400.7 456 1391C452.2 1381.3 452.3 1369.3 450 1360C447.7 1350.7 445.5 1340 442 1335C438.5 1330 433.2 1329 429 1330C424.8 1331 420.2 1334.3 417 1341C413.8 1347.7 412.2 1358.2 410 1370C407.8 1381.8 404 1412 404 1412C404 1412 393.2 1419.5 390 1416C386.8 1412.5 385 1402.2 385 1391C385 1379.8 386.8 1363 390 1349C393.2 1335 399.5 1320.8 404 1307C408.5 1293.2 414.2 1279.8 417 1266C419.8 1252.2 420 1235.2 421 1224C422 1212.8 422.3 1204.2 423 1199C423.7 1193.8 421.8 1192.3 425 1193Z" fill="#3E7FB5"/>
<path d="M498 1287C502 1284 510.3 1281.7 512 1285C513.7 1288.3 510.3 1298 508 1307C505.7 1316 498.7 1330.2 498 1339C497.3 1347.8 500.8 1355.8 504 1360C507.2 1364.2 512.8 1365.8 517 1364C521.2 1362.2 523.5 1354.7 529 1349C534.5 1343.3 550 1330 550 1330C550 1330 548.3 1355.7 550 1370C551.7 1384.3 560 1416 560 1416C560 1416 547.2 1401.2 542 1397C536.8 1392.8 532.5 1388.5 529 1391C525.5 1393.5 525.2 1409.7 521 1412C516.8 1414.3 509.5 1410.3 504 1405C498.5 1399.7 491.5 1392.8 488 1380C484.5 1367.2 483 1340.8 483 1328C483 1315.2 485.5 1309.8 488 1303C490.5 1296.2 494 1290 498 1287Z" fill="#3E7FB5"/>
<path d="M428 918L425 950" stroke="#000" stroke-width="5" stroke-linecap="round"/><ellipse cx="451" cy="894" rx="14" ry="6" transform="rotate(-48 451 894)" fill="#000"/>
<path d="M385 715C382.8 724.2 376.5 749.5 372 770C367.5 790.5 360.3 826.7 358 838" fill="none" stroke="#000" stroke-width="2.5" stroke-linecap="round" stroke-linejoin="round"/>
<path d="M438 689C436.3 700.8 431.5 735.7 428 760C424.5 784.3 418.8 822.5 417 835" fill="none" stroke="#000" stroke-width="2.5" stroke-linecap="round" stroke-linejoin="round"/>
<path d="M369 806C369 806 358 836 358 836C358 836 374.7 855 377 854C379.3 853 373.3 838 372 830C370.7 822 369 806 369 806Z" fill="#000"/>
<path d="M412 818C412 818 415.8 825.8 417 835C418.2 844.2 422.5 868.8 419 873C415.5 877.2 399.8 866.8 396 860C392.2 853.2 393.3 839 396 832C398.7 825 412 818 412 818Z" fill="#000"/>
<path d="M868 660C869 654.2 873.8 651.7 878 665C882.2 678.3 888.5 708.3 893 740C897.5 771.7 905 855 905 855C905 855 894.5 805.8 889 780C883.5 754.2 875.5 720 872 700C868.5 680 867 665.8 868 660Z" fill="#000"/>
<path d="M917 718C917 718 927 746.3 930 760C933 773.7 933.3 785 935 800C936.7 815 938.5 836 940 850C941.5 864 944 884 944 884C944 884 929.3 847.3 925 830C920.7 812.7 919.3 798.7 918 780C916.7 761.3 917 718 917 718Z" fill="#000"/>
<path d="M930 748C930 748 943.8 781.3 950 800C956.2 818.7 967 860 967 860C967 860 948.2 828.7 942 810C935.8 791.3 930 748 930 748Z" fill="#000"/>
<path d="M971 761C975.2 771.3 987 805 996 823C1005 841 1020.2 861.3 1025 869" fill="none" stroke="#000" stroke-width="4" stroke-linecap="round" stroke-linejoin="round"/>
<path d="M1075 792C1075.8 784 1081.5 772.5 1085 792C1088.5 811.5 1096 909 1096 909C1096 909 1083.5 859.5 1080 840C1076.5 820.5 1074.2 800 1075 792Z" fill="#000"/>
<path d="M978 1078C978 1078 986.8 1096.3 990 1110C993.2 1123.7 995.8 1143.3 997 1160C998.2 1176.7 998.2 1199.2 997 1210C995.8 1220.8 992.5 1224.2 990 1225C987.5 1225.8 983.7 1225.8 982 1215C980.3 1204.2 981.2 1177.5 980 1160C978.8 1142.5 975.3 1123.7 975 1110C974.7 1096.3 978 1078 978 1078Z" fill="#000"/>
<path d="M1032 1080C1035 1091.7 1047.8 1128 1050 1150C1052.2 1172 1049.2 1193.3 1045 1212C1040.8 1230.7 1033.3 1250.7 1025 1262C1016.7 1273.3 1000 1277 995 1280" fill="none" stroke="#000" stroke-width="4" stroke-linecap="round" stroke-linejoin="round"/>
<path d="M946 1214C942.5 1225 931.8 1259.5 925 1280C918.2 1300.5 908.3 1327.5 905 1337" fill="none" stroke="#000" stroke-width="2.2" stroke-linecap="round" stroke-linejoin="round"/>
<path d="M899 1316C899 1316 904.5 1328.7 906 1335C907.5 1341.3 908 1354 908 1354C908 1354 880 1350 880 1350C880 1350 899 1316 899 1316Z" fill="#000"/>
<path d="M1137 1190C1137 1190 1147.8 1205.2 1150 1215C1152.2 1224.8 1152.2 1236.3 1150 1249C1147.8 1261.7 1142.3 1278.2 1137 1291C1131.7 1303.8 1122.7 1314.5 1118 1326C1113.3 1337.5 1110.5 1348.8 1109 1360C1107.5 1371.2 1109 1393 1109 1393C1109 1393 1082 1340 1082 1340C1082 1340 1101.2 1316.7 1109 1305C1116.8 1293.3 1123.8 1281.7 1129 1270C1134.2 1258.3 1139.2 1246.5 1140 1235C1140.8 1223.5 1134.5 1208.5 1134 1201C1133.5 1193.5 1137 1190 1137 1190Z" fill="#000"/>
<path d="M1165 1303C1165 1303 1173.3 1297.8 1170 1312C1166.7 1326.2 1145 1388 1145 1388C1145 1388 1123 1390 1123 1390C1123 1390 1165 1303 1165 1303Z" fill="#000"/>
<path d="M1155 1135C1155 1135 1169.3 1148.3 1175 1160C1180.7 1171.7 1186.8 1191.3 1189 1205C1191.2 1218.7 1190.8 1230.8 1188 1242C1185.2 1253.2 1172 1272 1172 1272C1172 1272 1169.7 1257 1169 1245C1168.3 1233 1169.5 1214.2 1168 1200C1166.5 1185.8 1162.2 1170.8 1160 1160C1157.8 1149.2 1155 1135 1155 1135Z" fill="#000"/>
<path d="M529 1370C530.7 1360 542.7 1335.8 545 1340C547.3 1344.2 544.7 1385 543 1395C541.3 1405 537.3 1404.2 535 1400C532.7 1395.8 527.3 1380 529 1370Z" fill="#000"/>
<path d="M500 818C505 817.5 519.2 825.2 528 830C536.8 834.8 547.3 842.8 553 847C558.7 851.2 561.2 852.3 562 855C562.8 857.7 560.8 862.5 558 863C555.2 863.5 551.3 861.3 545 858C538.7 854.7 527.8 847.2 520 843C512.2 838.8 501.3 837.2 498 833C494.7 828.8 495 818.5 500 818Z" fill="#000"/>
<path d="M699 840C703.5 835 718.8 825.2 730 819C741.2 812.8 754 807.8 766 803C778 798.2 790 791.8 802 790C814 788.2 827.7 790 838 792C848.3 794 864 802 864 802C864 802 848.3 800.2 838 800C827.7 799.8 814 798.7 802 801C790 803.3 778 808.8 766 814C754 819.2 740.5 826.2 730 832C719.5 837.8 708.2 847.7 703 849C697.8 850.3 694.5 845 699 840Z" fill="#000"/>
<path d="M450 983C450 983 469.2 990.2 478 992C486.8 993.8 493.2 994.8 503 994C512.8 993.2 524.7 990.7 537 987C549.3 983.3 577 972 577 972C577 972 575.2 978.3 567 983C558.8 987.7 540 996.7 528 1000C516 1003.3 506 1003.5 495 1003C484 1002.5 469.5 1000.3 462 997C454.5 993.7 450 983 450 983Z" fill="#000"/>
<path d="M703 962C703 962 727.2 969.7 740 972C752.8 974.3 766.7 976.2 780 976C793.3 975.8 807.2 974.3 820 971C832.8 967.7 857 956 857 956C857 956 837.8 973.7 825 979C812.2 984.3 794.2 987.2 780 988C765.8 988.8 752.8 988.3 740 984C727.2 979.7 703 962 703 962Z" fill="#000"/>
<path d="M480 917C480.7 922 484.8 935.3 484 947C483.2 958.7 476.5 980.3 475 987" fill="none" stroke="#333" stroke-width="1.2" stroke-linecap="round" stroke-linejoin="round"/>
<path d="M585 910C588 916.2 598.8 934.5 603 947C607.2 959.5 608.7 972.5 610 985C611.3 997.5 612.2 1010.8 611 1022C609.8 1033.2 607 1041 603 1052C599 1063 589.2 1079.2 587 1088C584.8 1096.8 587 1099.3 590 1105C593 1110.7 601.8 1117.7 605 1122C608.2 1126.3 609 1131 609 1131C609 1131 624.8 1134.3 628 1135" fill="none" stroke="#111" stroke-width="1.6" stroke-linecap="round" stroke-linejoin="round"/>
<path d="M697 913C695.5 917.5 687.5 930 688 940C688.5 950 698 967.5 700 973" fill="none" stroke="#444" stroke-width="1.1" stroke-linecap="round" stroke-linejoin="round"/>
<path d="M753 897C753.2 903 756 920.8 754 933C752 945.2 743.2 963.8 741 970" fill="none" stroke="#444" stroke-width="1.1" stroke-linecap="round" stroke-linejoin="round"/>
<path d="M645 1123C647.5 1121.5 654.7 1115.3 660 1114C665.3 1112.7 672.5 1113.5 677 1115C681.5 1116.5 685.3 1121.7 687 1123" fill="none" stroke="#111" stroke-width="3" stroke-linecap="round" stroke-linejoin="round"/>
<path d="M660 1347C665.5 1348 681.8 1353 693 1353C704.2 1353 714.2 1351.7 727 1347C739.8 1342.3 755.7 1334 770 1325C784.3 1316 801.3 1301.7 813 1293C824.7 1284.3 828.8 1285.7 840 1273C851.2 1260.3 866.7 1234.2 880 1217C893.3 1199.8 913.3 1177.8 920 1170" fill="none" stroke="#111" stroke-width="1.8" stroke-linecap="round" stroke-linejoin="round"/>
<path d="M602 1187C602 1187 609.2 1188.3 615 1190C620.8 1191.7 630 1197.3 637 1197C644 1196.7 649.8 1188.7 657 1188C664.2 1187.3 671.2 1190.5 680 1193C688.8 1195.5 699.5 1200.7 710 1203C720.5 1205.3 743 1207 743 1207C743 1207 738.3 1213.2 730 1215C721.7 1216.8 706 1217.7 693 1218C680 1218.3 665.3 1216.3 652 1217C638.7 1217.7 621.2 1222.7 613 1222C604.8 1221.3 604.8 1218.8 603 1213C601.2 1207.2 602 1187 602 1187Z" fill="#000"/>
<path d="M613 1223C613 1223 630.5 1219.3 650 1218C669.5 1216.7 730 1215 730 1215C730 1215 717.5 1228.3 710 1235C702.5 1241.7 693.3 1251.2 685 1255C676.7 1258.8 667 1258.3 660 1258C653 1257.7 648.5 1256.3 643 1253C637.5 1249.7 632 1243 627 1238C622 1233 613 1223 613 1223Z" fill="#CE9594" stroke="#222" stroke-width="1"/>
<path d="M700 1351C700 1351 714.7 1350.5 725 1347C735.3 1343.5 749.5 1337.5 762 1330C774.5 1322.5 788.5 1310.5 800 1302C811.5 1293.5 820.7 1287.7 831 1279C841.3 1270.3 862 1250 862 1250C862 1250 842.5 1274.2 839 1281C835.5 1287.8 842.5 1286.2 841 1291C839.5 1295.8 832.7 1304.3 830 1310C827.3 1315.7 828.3 1320.5 825 1325C821.7 1329.5 816.3 1333.3 810 1337C803.7 1340.7 795 1344.2 787 1347C779 1349.8 772.3 1352.8 762 1354C751.7 1355.2 735.3 1354.5 725 1354C714.7 1353.5 700 1351 700 1351Z" fill="#000"/>
<path d="M761 1362L812 1347M765 1367L808 1353M770 1371L804 1359" stroke="#555" stroke-width="1.3"/>
<path d="M837.5 1133C837.5 1133 834.8 1142 836 1148C837.2 1154 840.7 1163.7 845 1169C849.3 1174.3 856.5 1177.8 862 1180C867.5 1182.2 871.8 1183 878 1182.5C884.2 1182 892.7 1179.9 899 1177C905.3 1174.1 912 1168.7 916 1165C920 1161.3 923 1155 923 1155C923 1155 912.5 1135 912.5 1135C912.5 1135 906.6 1144.3 903 1148C899.4 1151.7 895.8 1155.2 891 1157C886.2 1158.8 879.6 1159.3 874 1159C868.4 1158.7 862.3 1157 857.5 1155C852.7 1153 848.3 1150.7 845 1147C841.7 1143.3 837.5 1133 837.5 1133Z" fill="#000"/>
<path d="M860 1112.5C860 1112.5 856.3 1123.2 857 1128C857.7 1132.8 860.5 1137.3 864 1141C867.5 1144.7 872.8 1148.7 878 1150C883.2 1151.3 890 1150.5 895 1149C900 1147.5 904.5 1144.2 908 1141C911.5 1137.8 917.8 1134.8 916 1130C914.2 1125.2 897 1112 897 1112C897 1112 895.8 1125.5 893 1130C890.2 1134.5 884.2 1138.3 880 1139C875.8 1139.7 871 1136.8 868 1134C865 1131.2 863.3 1125.6 862 1122C860.7 1118.4 860 1112.5 860 1112.5Z" fill="#000"/>
</g></svg>

<div id="tb" class="abs"><div id="tbmid" class="abs"></div><div id="tbr" class="abs"></div></div>
<div id="puck" class="abs"></div>
<div id="pc1" class="abs"></div>
<div id="pc2" class="abs"></div>
<div id="sz" class="abs">3.3</div>
<div id="lt" class="abs"></div>
<div id="ltsep" class="abs"></div>
<div class="abs thumb" style="top:848px;height:107px"></div>
<div class="abs thumb" style="top:1038px;height:109px"></div>
<div id="rp" class="abs"><div id="rph" class="abs"></div><div id="rpsh" class="abs"></div><div id="rpc" class="abs"></div></div>
<div id="card1" class="abs card"><svg width="155" height="154" viewBox="0 0 155 154"><use href="#artg" transform="translate(-10,-50) scale(0.12)"/></svg></div>
<div id="card2" class="abs card"><svg width="160" height="158" viewBox="0 0 160 158">
<g fill="none" stroke="#666" stroke-width="0.7" opacity="0.75">
<path d="M30 61Q33 95 40 108Q52 126 66 134Q82 130 94 120Q102 108 107 92Q114 84 118 77Q124 62 122 53Q118 38 110 30Q96 18 79 17Q60 17 47 24Q36 30 32 38Q28 48 30 61"/>
<path d="M34 63Q36 100 48 115Q58 128 68 136M104 96Q100 112 92 124"/>
<path d="M21 69Q20 45 26 30Q40 16 63 14Q86 13 102 19Q118 28 126 46Q128 70 122 92Q120 115 118 136"/>
<path d="M24 75Q22 52 30 36Q45 22 70 20Q95 22 114 36Q124 52 124 75"/>
<path d="M21 89Q70 86 122 80M25 84Q75 81 124 76"/>
<path d="M58 17Q62 80 69 152M96 24Q100 60 103 120"/>
<path d="M35 68Q42 63 51 67M69 67Q80 58 91 64M33 86Q42 90 52 87M72 84Q82 88 92 85"/>
<path d="M44 45Q40 60 42 75M50 45Q55 40 62 44M67 46Q75 36 87 42Q91 55 90 75"/>
<path d="M62 84Q57 96 59 103Q62 106 66 105"/>
<path d="M57 114Q64 110 72 116Q78 115 84 116"/>
<path d="M107 78Q113 70 118 75Q118 86 107 93"/>
<path d="M22 95Q24 130 45 147M98 146Q103 135 101 126M130 107Q138 118 137 130M60 137Q90 134 120 131"/>
</g></svg></div>
<div id="card3" class="abs card"><svg width="160" height="95"><circle cx="118" cy="48" r="36" fill="none" stroke="#DADADA" stroke-width="1.5"/></svg></div>
<div id="pct" class="abs">37%</div>
<div id="wheel" class="abs"></div><div id="wheelin" class="abs"></div>

<svg id="ui" width="1440" height="1920" viewBox="0 0 1440 1920">
<defs>
<linearGradient id="gmove" x1="0" y1="0" x2="1" y2="0"><stop offset="0" stop-color="#555"/><stop offset="0.5" stop-color="#fff"/><stop offset="1" stop-color="#555"/></linearGradient>
<linearGradient id="gmovev" x1="0" y1="0" x2="0" y2="1"><stop offset="0" stop-color="#555"/><stop offset="0.5" stop-color="#fff"/><stop offset="1" stop-color="#555"/></linearGradient>
<linearGradient id="gchrome" x1="0" y1="0" x2="1" y2="0"><stop offset="0" stop-color="#777"/><stop offset="0.3" stop-color="#eee"/><stop offset="0.55" stop-color="#999"/><stop offset="0.8" stop-color="#333"/><stop offset="1" stop-color="#666"/></linearGradient>
<linearGradient id="gdark" x1="0" y1="0" x2="1" y2="0"><stop offset="0" stop-color="#666"/><stop offset="0.35" stop-color="#222"/><stop offset="0.7" stop-color="#444"/><stop offset="1" stop-color="#222"/></linearGradient>
<linearGradient id="gwood" x1="0" y1="0" x2="1" y2="0"><stop offset="0" stop-color="#e8e0d0"/><stop offset="0.5" stop-color="#fff"/><stop offset="1" stop-color="#a08060"/></linearGradient>
<linearGradient id="gbrist" x1="0" y1="0" x2="1" y2="0"><stop offset="0" stop-color="#3a332c"/><stop offset="0.5" stop-color="#6a6055"/><stop offset="1" stop-color="#2e2822"/></linearGradient>
<linearGradient id="ggray" x1="0" y1="0" x2="1" y2="0"><stop offset="0" stop-color="#555"/><stop offset="0.4" stop-color="#aaa"/><stop offset="0.75" stop-color="#777"/><stop offset="1" stop-color="#333"/></linearGradient>
<linearGradient id="gbase" x1="0" y1="0" x2="1" y2="0"><stop offset="0" stop-color="#9ea2a6"/><stop offset="0.5" stop-color="#656c73"/><stop offset="0.6" stop-color="#6a7178"/><stop offset="0.63" stop-color="#ffffff"/><stop offset="0.68" stop-color="#ffffff"/><stop offset="0.71" stop-color="#2f363d"/><stop offset="0.92" stop-color="#3a4148"/><stop offset="0.95" stop-color="#111"/><stop offset="1" stop-color="#111"/></linearGradient><linearGradient id="gtop" x1="0" y1="0" x2="1" y2="0"><stop offset="0" stop-color="#e9e4da"/><stop offset="0.5" stop-color="#fbfaf7"/><stop offset="0.62" stop-color="#d8dde0"/><stop offset="0.8" stop-color="#7d8a94"/><stop offset="1" stop-color="#9aa6ae"/></linearGradient>
<linearGradient id="gbucket" x1="0" y1="0" x2="0" y2="1"><stop offset="0" stop-color="#fafafa"/><stop offset="1" stop-color="#ddd"/></linearGradient>
</defs>
<g fill="#6B6B6B" stroke="none">
<!-- list -->
<rect x="260.5" y="28" width="36" height="30" rx="4" fill="none" stroke="#6B6B6B" stroke-width="2"/>
<circle cx="269" cy="35.8" r="1.9"/><circle cx="269" cy="43.2" r="1.9"/><circle cx="269" cy="50.6" r="1.9"/>
<path d="M275 35.8H290M275 43.2H290M275 50.6H290" stroke="#6B6B6B" stroke-width="2"/>
<!-- undo -->
<path d="M341 45L361 31V39H375Q388 39 393 31Q391 52 372 52H361V59Z"/>
<!-- redo -->
<path d="M497.6 45L477.6 31V39H464Q450 39 445 58Q448 52 466 52H477.6V59Z" fill="#BDBDBD"/>
<!-- select -->
<rect x="579.5" y="32" width="31" height="22" fill="none" stroke="#444" stroke-width="2" stroke-dasharray="4 3"/>
<rect x="581" y="33.5" width="28" height="19" fill="#EEF0F0"/>
<path d="M602.5 43.5V64L606 58L612 59.5L619 56.5Z" fill="#444"/>
<!-- move -->
<path d="M695.5 27L689 34H702Z M695.5 64.5L689 57.5H702Z M677 45.7L684 39V52.5Z M714.3 45.7L707.3 39V52.5Z" fill="#444"/>
<rect x="684" y="44.5" width="23" height="2.5" fill="url(#gmove)"/>
<rect x="694.3" y="34" width="2.5" height="23.5" fill="url(#gmovev)"/>
<!-- bucket -->
<path d="M781.7 30.5V63Q797 69 812 63V30.5Z" fill="#f1f2f3"/>
<path d="M782.5 57Q790 55 797 58Q805 61 811.5 58V63Q797 69 782.5 63Z" fill="#707070"/>
<path d="M797 58Q802 52 811.5 54V58Q805 61 797 58Z" fill="#b3b3b3"/>
<path d="M781.7 30.5V63.5M812 30.5V63.5" stroke="#777" stroke-width="1.8"/>
<path d="M781.7 63Q797 69.5 812 63" stroke="#777" stroke-width="1.8" fill="none"/>
<ellipse cx="797" cy="29.3" rx="16.4" ry="3" fill="#f8f8f8" stroke="#777" stroke-width="1.8"/>
<path d="M787.7 38.4Q777 42 776.8 49Q777 54 781.3 56.3" stroke="#333" stroke-width="1.1" fill="none"/><ellipse cx="787.7" cy="38.4" rx="1.2" ry="2.2" fill="#444"/>
<!-- ruler -->
<circle cx="895" cy="45" r="17" fill="none" stroke="#555" stroke-width="1.6" stroke-dasharray="3 2.5"/>
<g transform="rotate(-45 897 46)"><rect x="871" y="40" width="52" height="12" rx="1.5" fill="#f4f4f4" stroke="#555" stroke-width="2"/>
<path d="M876 40v4M880 40v3M884 40v4M888 40v3M892 40v4M896 40v3M900 40v4M904 40v3M908 40v4M912 40v3M916 40v4" stroke="#555" stroke-width="1.2"/></g>
<!-- symmetry -->
<path d="M993.8 25.5V66.5" stroke="#444" stroke-width="2" stroke-dasharray="7.3 4"/>
<path d="M986.3 27.3C978 29 972.5 32 973 36C973.5 40.5 985.5 41 985.8 44.5C986 48.5 973 51 973 55.5C973 59.5 978 62.5 986.3 64.2" fill="none" stroke="#666" stroke-width="2.6" stroke-linecap="round"/>
<path d="M1001.3 27.3C1009.6 29 1015.1 32 1014.6 36C1014.1 40.5 1002.1 41 1001.8 44.5C1001.6 48.5 1014.6 51 1014.6 55.5C1014.6 59.5 1009.6 62.5 1001.3 64.2" fill="none" stroke="#666" stroke-width="2.6" stroke-linecap="round"/>
<!-- crop partial -->
<path d="M1092 40.5H1075V64H1092" fill="#f2f2f2" stroke="#444" stroke-width="1.8"/>
<path d="M1092 30Q1084 32 1083.5 40Q1084 48 1092 50" fill="none" stroke="#444" stroke-width="1.6"/>
<!-- fullscreen -->
<rect x="1142.5" y="31" width="38" height="28" rx="3" fill="#f6f6f6" stroke="#6B6B6B" stroke-width="2"/>
<path d="M1152 35H1172M1147 38V52M1176 38V52" stroke="#6B6B6B" stroke-width="1.6"/>
<!-- brush size icon -->
<path d="M47.7 466.5L52 473H43.3Z"/><path d="M43.5 475.5H52.3L57 486V490H38.3V486Z"/>
<path d="M29 501.5H67" stroke="#6B6B6B" stroke-width="3.4" stroke-linecap="round"/><circle cx="41" cy="501.5" r="5.4"/>
<!-- plus -->
<path d="M1355 470V500M1340 485H1370" stroke="#707070" stroke-width="3" stroke-linecap="round"/>
</g>
<!-- puck brush -->
<path d="M212 220Q212 213 226.5 213Q241 213 241 220V253H212Z" fill="url(#gbrist)"/>
<rect x="211" y="251" width="31" height="6" fill="#c9a862"/>
<rect x="209" y="257" width="35" height="10" rx="2" fill="url(#gdark)"/>
<!-- pencil -->
<linearGradient id="gwood2" x1="0" y1="0" x2="1" y2="0"><stop offset="0" stop-color="#ddd6c8"/><stop offset="0.35" stop-color="#f7f2ea"/><stop offset="0.55" stop-color="#c4ab90"/><stop offset="1" stop-color="#9d7d5f"/></linearGradient>
<path d="M46.8 559.5L61 598H33.2Z" fill="url(#gwood2)"/><path d="M46.8 559.5L50.6 570H43Z" fill="#111"/>
<path d="M33.2 600Q33.5 596 36.5 596Q39 596 40 600Q41.5 594.5 46.8 594.5Q52 594.5 53.8 600Q55 596 57.5 596Q60.8 596 61 600V618H33.2Z" fill="#2c2c2c"/>
<path d="M33.2 600Q33.5 596 36.5 596Q39 596 40 600V618H33.2Z" fill="#9a9a9a"/><path d="M53.8 600Q55 596 57.5 596Q60.8 596 61 600V618H53.8Z" fill="#4a4a4a"/>
<!-- tech pen -->
<path d="M39.8 662H53.6L54.5 674H38.9Z" fill="url(#gchrome)"/>
<rect x="35.4" y="674" width="22" height="7" fill="url(#gchrome)"/><path d="M35.4 677.5H57.4" stroke="#888" stroke-width="0.8"/>
<path d="M35.4 681H57.4Q64 688 66 700H27.4Q29.5 688 35.4 681Z" fill="url(#gchrome)"/>
<rect x="45.5" y="662" width="3" height="38" fill="#1a1a1a"/>
<rect x="25.4" y="700" width="42" height="4.5" fill="#555"/>
<rect x="25.4" y="704.5" width="42" height="14.5" fill="url(#gchrome)"/>
<path d="M37 719Q37 708 46.5 708Q56 708 56 719Z" fill="#333"/><path d="M40 719Q40 711.5 46.5 711.5Q53 711.5 53 719Z" fill="#bbb"/>
<!-- marker -->
<path d="M38.3 767L55 762V774.5H38.3Z" fill="#c9c8bb" stroke="#555" stroke-width="0.8"/>
<rect x="37" y="774.5" width="19.5" height="11.5" fill="url(#gdark)"/>
<path d="M37 786H56.5L65.3 798V809.5H28.8V798Z" fill="url(#gdark)"/>
<path d="M31 797H63" stroke="#999" stroke-width="1"/>
<rect x="25.2" y="809.5" width="43" height="14.5" fill="url(#gchrome)"/>
<!-- chisel -->
<path d="M38 880L58 865V895H38Z" fill="url(#ggray)"/><rect x="35" y="895" width="24" height="22" rx="3" fill="url(#gdark)"/>
<!-- ballpoint -->
<path d="M44 963H50L54 980Q60 995 60 1008H34Q34 995 40 980Z" fill="url(#gchrome)"/><rect x="34" y="1008" width="26" height="15" fill="url(#gdark)"/>
<!-- brush -->
<path d="M46.5 1066Q52 1085 53 1106H40Q41 1085 46.5 1066Z" fill="#8a8070"/><path d="M39 1106H54L57 1124H36Z" fill="url(#gchrome)"/>
<!-- small brush -->
<path d="M47 1172Q51 1185 52 1198H42Q43 1185 47 1172Z" fill="#333"/><path d="M41 1198H53L57 1223H38Z" fill="url(#gdark)"/>
<!-- nib -->
<path d="M47.5 1269Q60 1290 57 1312H38Q35 1290 47.5 1269Z" fill="url(#gchrome)"/><path d="M47 1280V1310" stroke="#222" stroke-width="2"/><path d="M36 1322H59V1328H36Z" fill="#333"/><path d="M42 1312H53V1322H42Z" fill="#888"/>
<!-- eraser hard -->
<rect x="23" y="1374" width="49" height="18" fill="url(#gtop)" stroke="#888" stroke-width="0.8"/><rect x="22" y="1391" width="52" height="32" fill="url(#gbase)"/><rect x="22" y="1421" width="52" height="2.5" fill="#222"/>
<!-- eraser soft -->
<path d="M23 1497Q24 1482 40 1482H57Q71 1483 72 1497Z" fill="url(#gtop)" stroke="#999" stroke-width="0.8"/><rect x="22" y="1496" width="52" height="29" fill="url(#gbase)"/><rect x="22" y="1523" width="52" height="2.5" fill="#222"/>
<!-- eyes in layers -->
<g fill="#8A8A8A">
<path d="M1288 1036Q1302 1020 1317 1036Q1302 1052 1288 1036Z"/><circle cx="1302" cy="1036" r="5" fill="#fff"/><circle cx="1302" cy="1036" r="3"/>
<path d="M1289 1200Q1302 1186 1316 1200Q1302 1214 1289 1200Z"/><circle cx="1302" cy="1200" r="4.5" fill="#FDFDFD"/><circle cx="1302" cy="1200" r="2.5"/>
<path d="M1290 1212L1314 1188" stroke="#8A8A8A" stroke-width="2.5"/>
<path d="M1289 1366Q1302 1352 1316 1366Q1302 1380 1289 1366Z"/><circle cx="1302" cy="1366" r="4.5" fill="#FDFDFD"/><circle cx="1302" cy="1366" r="2.5"/>
<!-- lock -->
<path d="M1295.7 1141V1135Q1295.7 1131.5 1299.5 1131.5H1303.5Q1307.3 1131.5 1307.3 1135V1138.5" fill="none" stroke="#9A9A9A" stroke-width="3"/>
<rect x="1292.3" y="1141" width="18.4" height="14.5" fill="#9A9A9A"/>
<path d="M1297.4 1142.8h4v3.8h-4zM1305.4 1142.8h4v3.8h-4zM1293.4 1146.6h4v3.8h-4zM1301.4 1146.6h4v3.8h-4zM1297.4 1150.4h4v3.8h-4zM1305.4 1150.4h4v3.8h-4z" fill="#fff"/>
</g>
<!-- loading -->
<path d="M705 1824A15 15 0 0 1 735 1824H729.4A9.4 9.4 0 0 0 710.6 1824Z M705 1828A15 15 0 0 0 735 1828H729.4A9.4 9.4 0 0 1 710.6 1828Z" fill="#EAEAEA"/>
</svg>
</body></html>
